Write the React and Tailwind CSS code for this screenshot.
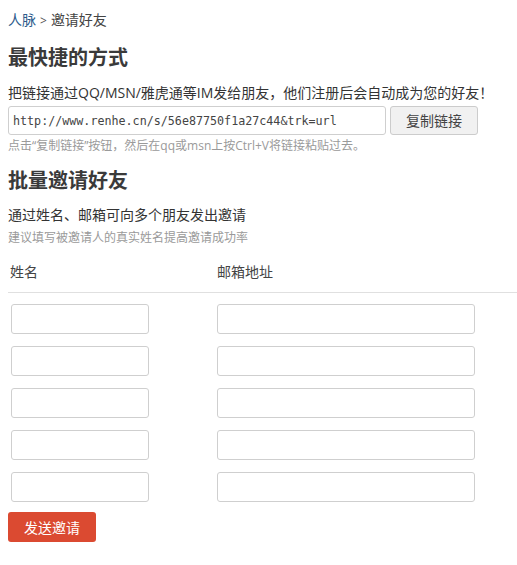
import React from 'react';

const font = { fontFamily: '"Open Sans", "Noto Sans CJK SC", sans-serif' };

const InviteRow = () => (
  <div className="flex items-center">
    <input className="ml-[3px] h-[30px] w-[138px] rounded-[3px] border border-[#cfcfcf] bg-white outline-none" />
    <input className="ml-[68px] h-[30px] w-[258px] rounded-[3px] border border-[#cfcfcf] bg-white outline-none" />
  </div>
);

export default function App() {
  return (
    <div className="min-h-[565px] bg-white pl-2 pt-[10px] text-[#333]" style={font}>
      <div className="text-[14px] leading-5">
        <a className="text-[#2d5b8c]">人脉</a>
        <span className="mx-[4px] text-[12px] text-[#555]">&gt;</span>
        <span className="text-[#444]">邀请好友</span>
      </div>

      <h2 className="mt-[13px] text-[20px] font-bold leading-7 text-[#3a3a3a]">最快捷的方式</h2>
      <p className="mt-[11px] text-[14px] leading-5 text-[#333]">
        把链接通过QQ/MSN/雅虎通等IM发给朋友，他们注册后会自动成为您的好友！
      </p>

      <div className="mt-[3px] flex items-center">
        <input
          readOnly
          value="http://www.renhe.cn/s/56e87750f1a27c44&trk=url"
          className="h-[29px] w-[378px] rounded-[3px] border border-[#cfcfcf] bg-white px-[4px] text-[11.7px] text-[#444] outline-none"
          style={{ fontFamily: '"DejaVu Sans Mono", monospace' }}
        />
        <button className="ml-[4px] h-[29px] w-[88px] rounded-[3px] border border-[#cccccc] bg-[#f1f1f1] text-[14px] text-[#444]">
          复制链接
        </button>
      </div>
      <p className="mt-[2px] text-[12px] leading-[18px] text-[#9a9a9a]">
        点击“复制链接”按钮，然后在qq或msn上按Ctrl+V将链接粘贴过去。
      </p>

      <h2 className="mt-[12px] text-[20px] font-bold leading-7 text-[#3a3a3a]">批量邀请好友</h2>
      <p className="mt-[10px] text-[14px] leading-5 text-[#333]">通过姓名、邮箱可向多个朋友发出邀请</p>
      <p className="mt-[4px] text-[12px] leading-[18px] text-[#9a9a9a]">建议填写被邀请人的真实姓名提高邀请成功率</p>

      <div className="mt-[15px] flex border-b border-[#e0e0e0] pb-[10px] text-[14px] leading-5 text-[#444]">
        <span className="ml-[2px] w-[207px]">姓名</span>
        <span>邮箱地址</span>
      </div>

      <div className="mt-[11px] flex flex-col gap-[12px]">
        <InviteRow />
        <InviteRow />
        <InviteRow />
        <InviteRow />
        <InviteRow />
      </div>

      <button className="mt-[10px] h-[30px] w-[88px] rounded-[3px] bg-[#db4a31] text-[14px] text-white">
        发送邀请
      </button>
    </div>
  );
}
